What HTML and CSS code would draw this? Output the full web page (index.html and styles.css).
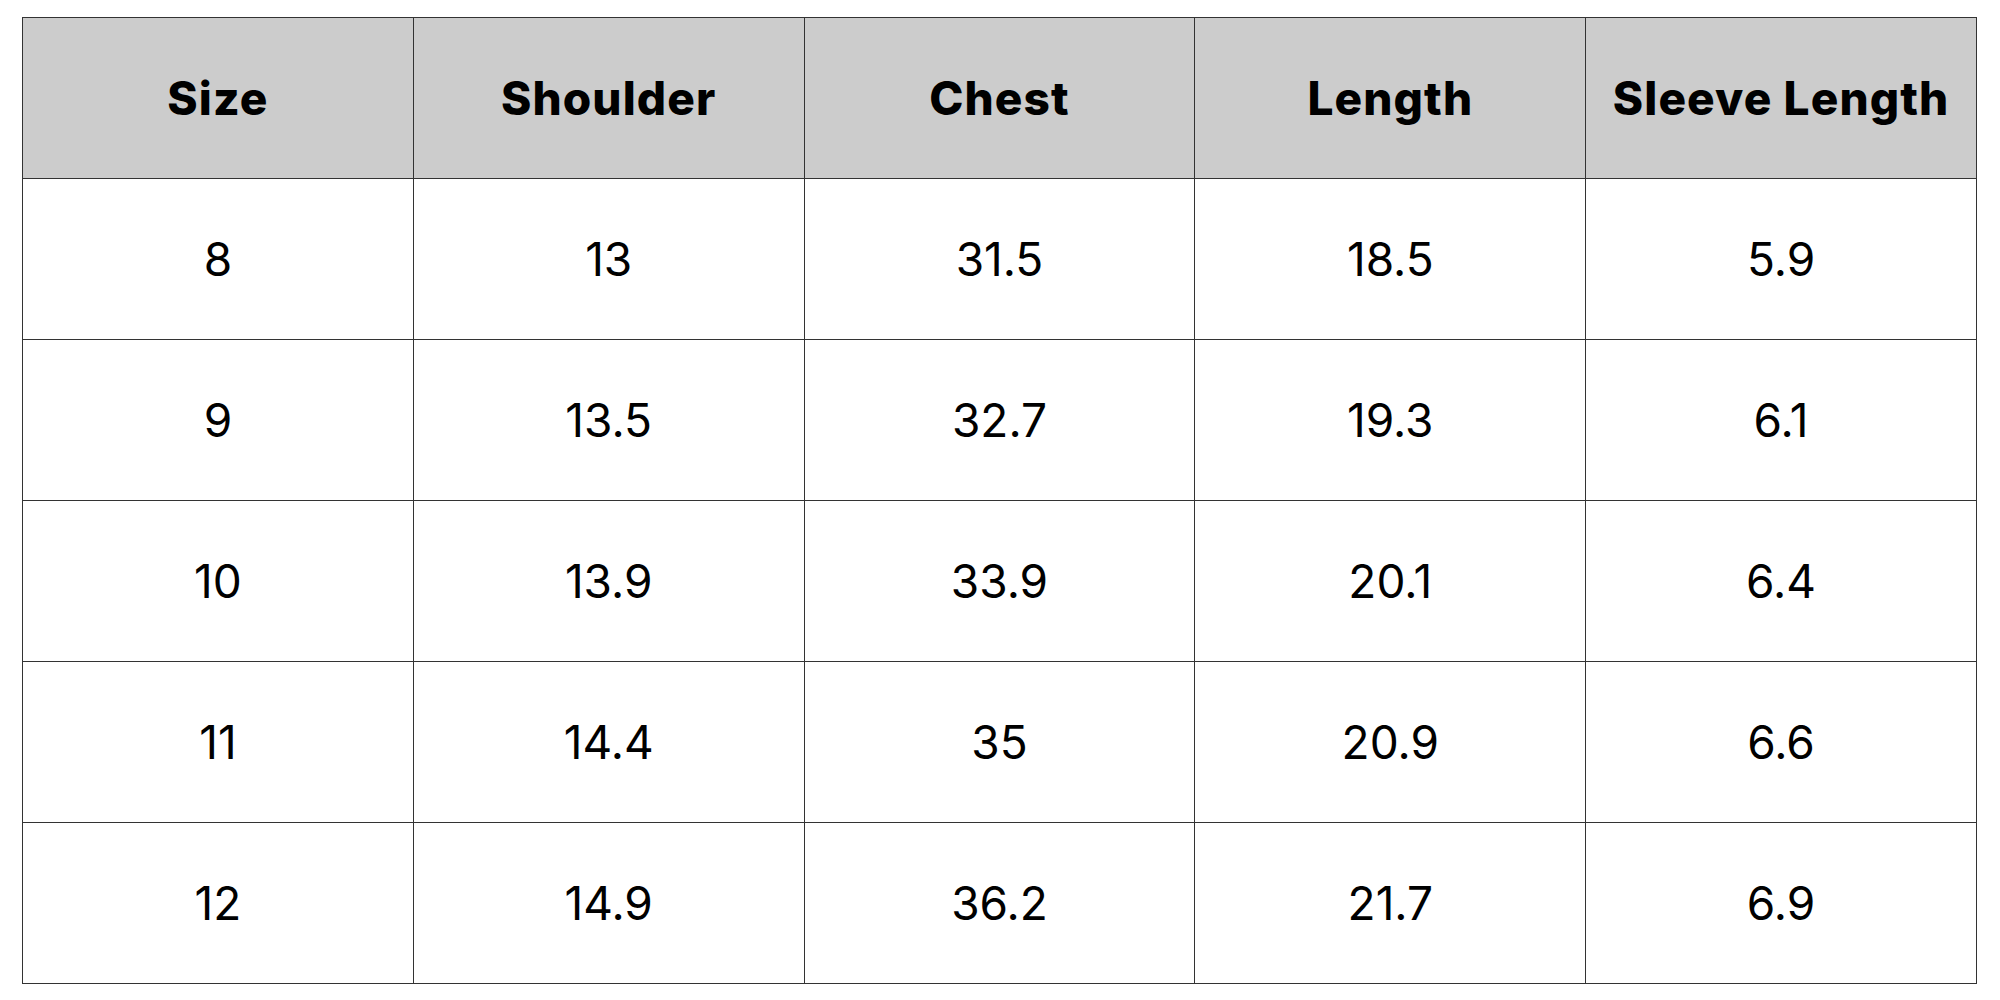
FILE: index.html
```html
<!DOCTYPE html>
<html lang="en">
<head>
<meta charset="utf-8">
<title>Size Chart</title>
<link rel="stylesheet" href="styles.css">
</head>
<body>
<table class="size-table">
  <thead>
    <tr><th>Size</th><th>Shoulder</th><th>Chest</th><th>Length</th><th>Sleeve Length</th></tr>
  </thead>
  <tbody>
    <tr><td>8</td><td>13</td><td>31.5</td><td>18.5</td><td>5.9</td></tr>
    <tr><td>9</td><td>13.5</td><td>32.7</td><td>19.3</td><td>6.1</td></tr>
    <tr><td>10</td><td>13.9</td><td>33.9</td><td>20.1</td><td>6.4</td></tr>
    <tr><td>11</td><td>14.4</td><td>35</td><td>20.9</td><td>6.6</td></tr>
    <tr><td>12</td><td>14.9</td><td>36.2</td><td>21.7</td><td>6.9</td></tr>
  </tbody>
</table>
</body>
</html>
```
FILE: styles.css
```css
html, body {
  margin: 0;
  padding: 0;
  background: #fff;
}
body {
  padding: 17px 0 0 22px;
  font-family: "Inter", "Liberation Sans", sans-serif;
  color: #000;
}
.size-table {
  border-collapse: collapse;
  table-layout: fixed;
  width: 1955px;
}
.size-table th,
.size-table td {
  border: 1px solid #333;
  height: 160px;
  padding: 0;
  text-align: center;
  vertical-align: middle;
  width: 20%;
}
.size-table th {
  background: #cccccc;
  font-weight: 800;
  font-size: 46px;
  letter-spacing: 1.1px;
}
.size-table td {
  font-weight: 400;
  font-size: 46px;
}
```
